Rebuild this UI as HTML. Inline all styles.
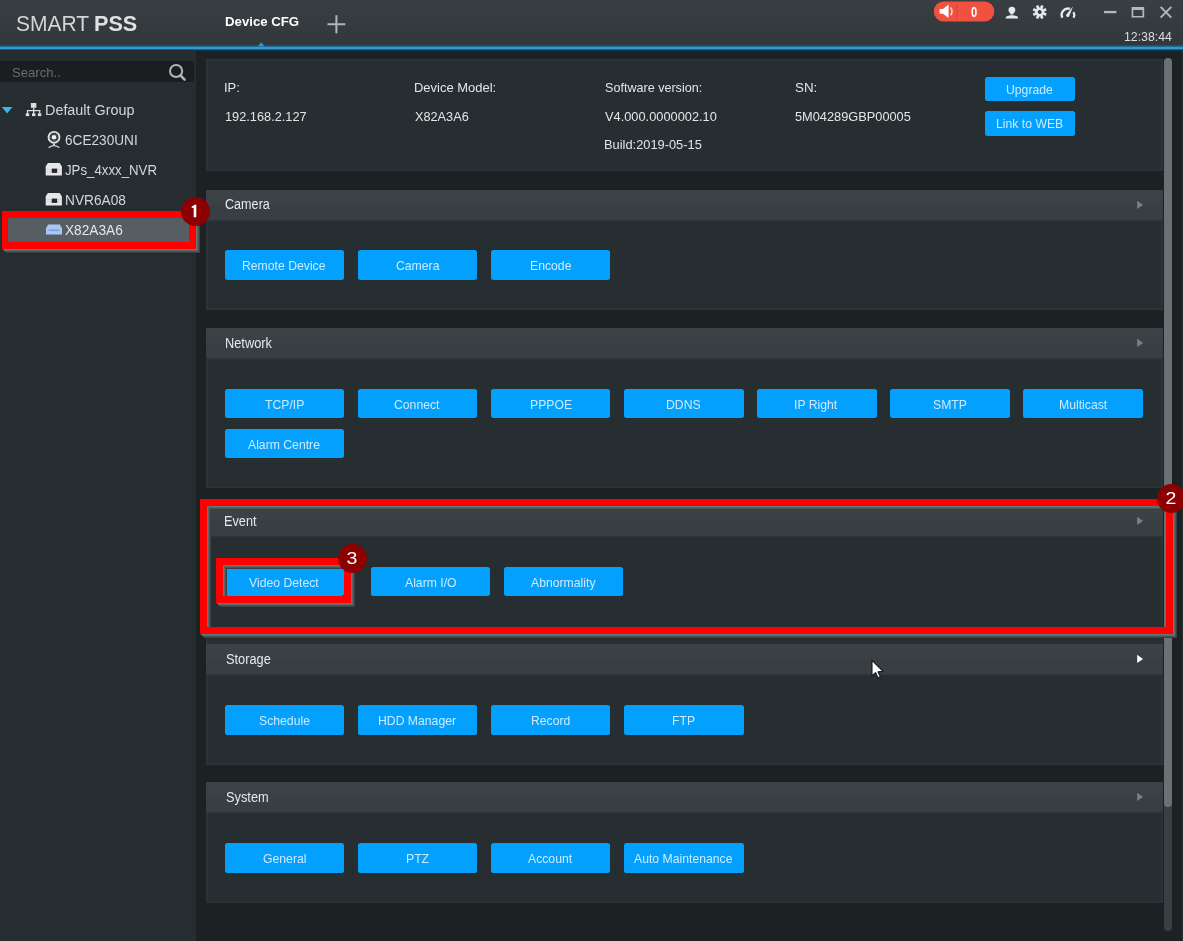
<!DOCTYPE html>
<html><head><meta charset="utf-8">
<style>
*{box-sizing:border-box;margin:0;padding:0}
html,body{width:1183px;height:941px;overflow:hidden;background:#1c2123;font-family:"Liberation Sans",sans-serif}
.abs{position:absolute}
#top{position:absolute;left:0;top:0;width:1183px;height:46px;background:linear-gradient(#393e42,#353a3e 60%,#32373b)}
#blue{position:absolute;left:0;top:45px;width:1183px;height:6px;background:linear-gradient(#2a4a5c 0%,#13608f 22%,#3796cf 40%,#3a9cd5 58%,#145c8a 74%,#0c3a58 88%,#17242c 100%)}
#side{position:absolute;left:0;top:50px;width:196.3px;height:891px;background:#262d30}
#search{position:absolute;left:0;top:61.4px;width:194.3px;height:21px;background:#1b1e21;border-radius:0 3px 3px 0}
.t{position:absolute;z-index:5;white-space:nowrap;line-height:20px;transform-origin:left center}
.panel{position:absolute;left:206.3px;width:956.5px;background:#272e31;box-shadow:inset 0 0 0 1.5px #2e3538}
.hdr{position:absolute;left:206.3px;width:956.5px;height:30px;background:linear-gradient(#3c4245,#3a4043 45%,#383e42 55%,#383e42)}
.btn{position:absolute;background:#03a1fd;border-radius:2.5px}
.red{position:absolute;z-index:3;border:7px solid #ff0000;filter:drop-shadow(1px 1px 0 #6d7273) drop-shadow(1px 1px 0 #5f6465) drop-shadow(1px 1px 0 #4e5355) drop-shadow(1px 1px 0.4px #3a3f42)}
.badge{position:absolute;z-index:6;width:29.6px;height:29.6px;border-radius:50%;background:#8b0000}
.bt{position:absolute;z-index:7;color:#fff;font-size:17px;line-height:20px;width:30px;text-align:center}
</style></head><body>
<div id="top"></div>
<div id="blue"></div>
<svg class="abs" style="left:256px;top:40px" width="12" height="8"><path d="M2,6.2 L5.2,2.2 L8.4,6.2 Z" fill="#2d97d4"/></svg>
<!-- plus -->
<svg class="abs" style="left:326px;top:14px" width="22" height="22"><path d="M1.5,10.2 H19.3 M10.4,1.2 V19.2" stroke="#b3b6b8" stroke-width="2" fill="none"/></svg>

<!-- top right icons -->
<svg class="abs" style="left:930px;top:0" width="253" height="24">
 <rect x="3.8" y="1.4" width="60.5" height="20.2" rx="10.1" fill="#f1513f"/>
 <rect x="26.4" y="4.5" width="1" height="14" fill="#d9432f"/>
 <path d="M9.6,9 H13 L18.6,4.6 V18 L13,13.8 H9.6 Z" fill="#fff"/>
 <path d="M20.5,7.5 Q23.6,11.3 20.5,15.2" stroke="#fbd0c8" stroke-width="1.6" fill="none"/>
 <!-- user -->
 <path d="M81.9,6.7 C84.2,6.7 85.4,8.3 85.3,10 C85.2,11.8 84.2,13 83.2,13.8 L83.2,14.6 L80.6,14.6 L80.6,13.8 C79.6,13 78.6,11.8 78.5,10 C78.4,8.3 79.6,6.7 81.9,6.7 Z" fill="#e6e8ea"/>
 <path d="M75.8,18.5 V17.6 C75.8,16.2 78.5,15.2 81.9,15.2 C85.3,15.2 88,16.2 88,17.6 V18.5 Z" fill="#e6e8ea"/>
 <!-- gear -->
 <g transform="translate(109.7,12) rotate(22.5)" fill="none" stroke="#e6e8ea">
  <circle r="3.35" stroke-width="2.7"/>
  <g stroke-width="2.7">
   <path d="M0,-4.2 V-7"/><path d="M0,4.2 V7"/><path d="M-4.2,0 H-7"/><path d="M4.2,0 H7"/>
   <path d="M3,-3 L4.9,-4.9"/><path d="M-3,-3 L-4.9,-4.9"/><path d="M3,3 L4.9,4.9"/><path d="M-3,3 L-4.9,4.9"/>
  </g>
 </g>
 <!-- gauge -->
 <path d="M132.39,17.76 A6.3,6.3 0 0 1 139.95,8.91" stroke="#e6e8ea" stroke-width="2.4" fill="none"/>
 <path d="M143.56,11.94 A6.3,6.3 0 0 1 143.61,17.76" stroke="#e6e8ea" stroke-width="2.3" fill="none"/>
 <path d="M136.3,14.4 L143.1,6.3 L139.2,16.2 A1.6,1.6 0 0 1 136.3,14.4 Z" fill="#e6e8ea"/>
 <!-- window controls -->
 <rect x="174" y="10.9" width="12.4" height="2.3" fill="#b6b9bc"/>
 <path d="M201.6,7 H214.2 V17.6 H201.6 Z M203.3,10 V15.9 H212.5 V10 Z" fill="#b6b9bc" fill-rule="evenodd"/>
 <path d="M230.6,6.9 L241.3,17.6 M241.3,6.9 L230.6,17.6" stroke="#b6b9bc" stroke-width="1.9" fill="none"/>
</svg>
<div class="t" style="left:970.8px;top:2.9px;font-size:13px;font-weight:bold;color:#fff;width:6px;transform:scale(.86,1.12)">0</div>

<div id="side"></div>
<div id="search"></div>
<svg class="abs" style="left:166px;top:61px" width="22" height="22"><circle cx="10.1" cy="10" r="6.1" stroke="#b2b5b8" stroke-width="2" fill="none"/><path d="M14.4,14.4 L18.6,18.6" stroke="#b2b5b8" stroke-width="2.6" stroke-linecap="round"/></svg>

<!-- tree icons -->
<svg class="abs" style="left:0;top:100px" width="70" height="140">
 <path d="M1.8,7 H12.4 L7.1,13.6 Z" fill="#36b5ef"/>
 <g fill="#dedede">
  <rect x="30.9" y="3" width="5.4" height="4.8"/>
  <rect x="33" y="7.8" width="1.3" height="5.6"/>
  <rect x="26.9" y="10" width="13.4" height="1.2"/>
  <rect x="26.9" y="10" width="1.2" height="3.6"/><rect x="39.1" y="10" width="1.2" height="3.6"/>
  <rect x="25.8" y="13.3" width="3.4" height="2.8"/><rect x="32" y="13.3" width="3.4" height="2.8"/><rect x="37.9" y="13.3" width="3.4" height="2.8"/>
 </g>
 <!-- camera -->
 <circle cx="54" cy="37.3" r="5.45" stroke="#e0e0e0" stroke-width="1.9" fill="none"/>
 <circle cx="54" cy="37.3" r="2.3" fill="#f2f2f2"/>
 <circle cx="54" cy="37.3" r="3.4" stroke="#6f7375" stroke-width="0.6" fill="none"/>
 <path d="M53,43.5 h2 v1.6 h-2 z" fill="#cfcfcf"/>
 <path d="M48.6,47.7 Q54,43.6 59.4,47.7" stroke="#cfcfcf" stroke-width="1.3" fill="none"/>
 <!-- nvr 1 -->
 <g id="nvr"><path d="M47.9,63 H59.7 L61.9,66.6 V75.5 H45.7 V66.6 Z" fill="#e7e7e7"/><rect x="51.7" y="68.6" width="5.5" height="4.3" fill="#23272a"/><path d="M46.5,69.5 H51 M46.5,71.8 H51 M57.8,69.5 H61 M57.8,71.8 H61" stroke="#c8c8c8" stroke-width="0.7"/></g>
 <use href="#nvr" y="30"/>
 <path d="M48.2,124.4 H59.8 L62,128.2 V134.5 H46 V128.2 Z" fill="#a9c8f1"/>
 <rect x="48.5" y="129.6" width="11" height="1.3" fill="#6c9de0"/>
</svg>
<!-- selected row -->
<div class="abs" style="left:8.4px;top:217.8px;width:180.8px;height:23.9px;background:#575e63;z-index:4"></div>
<svg class="abs" style="left:40px;top:220px;z-index:5" width="30" height="20"><path d="M8.2,4.4 H19.8 L22,8.2 V14.5 H6 V8.2 Z" fill="#a9c8f1"/><rect x="8.5" y="9.6" width="11" height="1.3" fill="#6c9de0"/></svg>

<!-- info panel -->
<div class="panel" style="top:59.3px;height:112px"></div>
<div class="hdr" style="top:189.5px"></div><div class="panel" style="top:219.5px;height:90.5px"></div>
<svg class="abs" style="left:1136px;top:199.5px" width="8" height="10"><path d="M1.2,0.8 L7,4.9 L1.2,9 Z" fill="#7b8085"/></svg>
<div class="hdr" style="top:327.5px"></div><div class="panel" style="top:357.5px;height:130.3px"></div>
<svg class="abs" style="left:1136px;top:337.5px" width="8" height="10"><path d="M1.2,0.8 L7,4.9 L1.2,9 Z" fill="#7b8085"/></svg>
<div class="hdr" style="top:506px"></div><div class="panel" style="top:536px;height:121px"></div>
<svg class="abs" style="left:1136px;top:516px" width="8" height="10"><path d="M1.2,0.8 L7,4.9 L1.2,9 Z" fill="#7b8085"/></svg>
<div class="hdr" style="top:644.4px"></div><div class="panel" style="top:674.4px;height:90.2px"></div>
<svg class="abs" style="left:1136px;top:654.4px" width="8" height="10"><path d="M1.2,0.8 L7,4.9 L1.2,9 Z" fill="#ffffff"/></svg>
<div class="hdr" style="top:782.2px"></div><div class="panel" style="top:812.2px;height:90.5px"></div>
<svg class="abs" style="left:1136px;top:792.2px" width="8" height="10"><path d="M1.2,0.8 L7,4.9 L1.2,9 Z" fill="#7b8085"/></svg>
<div class="btn" style="left:985px;top:77px;width:90px;height:24.4px"></div>
<div class="btn" style="left:985px;top:111.2px;width:90px;height:24.6px"></div>
<div class="btn" style="left:224.5px;top:250.2px;width:119.7px;height:29.7px"></div>
<div class="btn" style="left:357.6px;top:250.2px;width:119.7px;height:29.7px"></div>
<div class="btn" style="left:490.7px;top:250.2px;width:119.7px;height:29.7px"></div>
<div class="btn" style="left:224.5px;top:388.6px;width:119.7px;height:29.7px"></div>
<div class="btn" style="left:357.6px;top:388.6px;width:119.7px;height:29.7px"></div>
<div class="btn" style="left:490.7px;top:388.6px;width:119.7px;height:29.7px"></div>
<div class="btn" style="left:623.9px;top:388.6px;width:119.7px;height:29.7px"></div>
<div class="btn" style="left:757px;top:388.6px;width:119.7px;height:29.7px"></div>
<div class="btn" style="left:890.1px;top:388.6px;width:119.7px;height:29.7px"></div>
<div class="btn" style="left:1023.2px;top:388.6px;width:119.7px;height:29.7px"></div>
<div class="btn" style="left:224.5px;top:428.6px;width:119.7px;height:29.7px"></div>
<div class="btn" style="left:224.5px;top:566.8px;width:119.7px;height:29.7px"></div>
<div class="btn" style="left:370.6px;top:566.8px;width:119.7px;height:29.7px"></div>
<div class="btn" style="left:503.8px;top:566.8px;width:119.7px;height:29.7px"></div>
<div class="btn" style="left:224.5px;top:705px;width:119.7px;height:29.7px"></div>
<div class="btn" style="left:357.6px;top:705px;width:119.7px;height:29.7px"></div>
<div class="btn" style="left:490.7px;top:705px;width:119.7px;height:29.7px"></div>
<div class="btn" style="left:623.9px;top:705px;width:119.7px;height:29.7px"></div>
<div class="btn" style="left:224.5px;top:843.2px;width:119.7px;height:29.7px"></div>
<div class="btn" style="left:357.6px;top:843.2px;width:119.7px;height:29.7px"></div>
<div class="btn" style="left:490.7px;top:843.2px;width:119.7px;height:29.7px"></div>
<div class="btn" style="left:623.9px;top:843.2px;width:119.7px;height:29.7px"></div>
<div class="t" style="left:15.70px;top:13.90px;font-size:21.5px;color:#d3d5d7;font-weight:normal;transform:scale(0.9755,1.0)">SMART</div>
<div class="t" style="left:94.09px;top:13.90px;font-size:21.5px;color:#dfe1e3;font-weight:bold;transform:scale(1.0053,1.0)">PSS</div>
<div class="t" style="left:224.60px;top:12.00px;font-size:13px;color:#ffffff;font-weight:bold;transform:scale(1.0156,1.0)">Device CFG</div>
<div class="t" style="left:1124.00px;top:26.80px;font-size:12.5px;color:#dcdee0;font-weight:normal;transform:scale(0.9855,1.08)">12:38:44</div>
<div class="t" style="left:12.00px;top:62.80px;font-size:13px;color:#676c70;font-weight:normal;transform:scale(1.0104,1.0)">Search..</div>
<div class="t" style="left:44.57px;top:99.80px;font-size:14px;color:#d4d6d8;font-weight:normal;transform:scale(1.0270,1.04)">Default Group</div>
<div class="t" style="left:64.90px;top:129.60px;font-size:14px;color:#d4d6d8;font-weight:normal;transform:scale(0.9727,1.04)">6CE230UNI</div>
<div class="t" style="left:65.20px;top:159.90px;font-size:14px;color:#d4d6d8;font-weight:normal;transform:scale(0.9460,1.04)">JPs_4xxx_NVR</div>
<div class="t" style="left:64.52px;top:189.90px;font-size:14px;color:#d4d6d8;font-weight:normal;transform:scale(0.9794,1.04)">NVR6A08</div>
<div class="t" style="left:65.20px;top:219.70px;font-size:14px;color:#e3e5e8;font-weight:normal;transform:scale(0.9769,1.04)">X82A3A6</div>
<div class="t" style="left:223.81px;top:77.80px;font-size:13px;color:#e3e5e7;font-weight:normal;transform:scale(0.9942,1.05)">IP:</div>
<div class="t" style="left:224.80px;top:106.50px;font-size:13px;color:#e3e5e7;font-weight:normal;transform:scale(0.9818,1.05)">192.168.2.127</div>
<div class="t" style="left:413.50px;top:77.80px;font-size:13px;color:#e3e5e7;font-weight:normal;transform:scale(0.9981,1.05)">Device Model:</div>
<div class="t" style="left:414.50px;top:106.50px;font-size:13px;color:#e3e5e7;font-weight:normal;transform:scale(0.9780,1.05)">X82A3A6</div>
<div class="t" style="left:604.90px;top:77.80px;font-size:13px;color:#e3e5e7;font-weight:normal;transform:scale(0.9677,1.05)">Software version:</div>
<div class="t" style="left:604.90px;top:106.50px;font-size:13px;color:#e3e5e7;font-weight:normal;transform:scale(0.9853,1.05)">V4.000.0000002.10</div>
<div class="t" style="left:603.91px;top:134.80px;font-size:13px;color:#e3e5e7;font-weight:normal;transform:scale(0.9879,1.05)">Build:2019-05-15</div>
<div class="t" style="left:794.90px;top:77.80px;font-size:13px;color:#e3e5e7;font-weight:normal;transform:scale(1.0257,1.05)">SN:</div>
<div class="t" style="left:794.90px;top:106.50px;font-size:13px;color:#e3e5e7;font-weight:normal;transform:scale(0.9831,1.05)">5M04289GBP00005</div>
<div class="t" style="left:224.80px;top:194.90px;font-size:13px;color:#e6e8ea;font-weight:normal;transform:scale(0.9700,1.08)">Camera</div>
<div class="t" style="left:224.51px;top:333.60px;font-size:13px;color:#e6e8ea;font-weight:normal;transform:scale(0.9850,1.08)">Network</div>
<div class="t" style="left:224.32px;top:512.10px;font-size:13px;color:#e6e8ea;font-weight:normal;transform:scale(0.9800,1.08)">Event</div>
<div class="t" style="left:225.50px;top:650.40px;font-size:13px;color:#e6e8ea;font-weight:normal;transform:scale(0.9850,1.08)">Storage</div>
<div class="t" style="left:225.50px;top:788.30px;font-size:13px;color:#e6e8ea;font-weight:normal;transform:scale(0.9850,1.08)">System</div>
<div class="t" style="left:1006.43px;top:79.70px;font-size:12.1px;color:#cdebff;font-weight:normal;transform:scale(1.0100,1.05)">Upgrade</div>
<div class="t" style="left:996.43px;top:113.90px;font-size:12.1px;color:#cdebff;font-weight:normal;transform:scale(1.0100,1.05)">Link to WEB</div>
<div class="t" style="left:242.46px;top:256.25px;font-size:12.1px;color:#cdebff;font-weight:normal;transform:scale(1.0100,1.05)">Remote Device</div>
<div class="t" style="left:395.59px;top:256.25px;font-size:12.1px;color:#cdebff;font-weight:normal;transform:scale(1.0100,1.05)">Camera</div>
<div class="t" style="left:529.70px;top:256.25px;font-size:12.1px;color:#cdebff;font-weight:normal;transform:scale(1.0100,1.05)">Encode</div>
<div class="t" style="left:264.70px;top:394.65px;font-size:12.1px;color:#cdebff;font-weight:normal;transform:scale(1.0100,1.05)">TCP/IP</div>
<div class="t" style="left:394.38px;top:394.65px;font-size:12.1px;color:#cdebff;font-weight:normal;transform:scale(1.0100,1.05)">Connect</div>
<div class="t" style="left:529.54px;top:394.65px;font-size:12.1px;color:#cdebff;font-weight:normal;transform:scale(1.0100,1.05)">PPPOE</div>
<div class="t" style="left:666.48px;top:394.65px;font-size:12.1px;color:#cdebff;font-weight:normal;transform:scale(1.0100,1.05)">DDNS</div>
<div class="t" style="left:794.30px;top:394.65px;font-size:12.1px;color:#cdebff;font-weight:normal;transform:scale(1.0100,1.05)">IP Right</div>
<div class="t" style="left:933.02px;top:394.65px;font-size:12.1px;color:#cdebff;font-weight:normal;transform:scale(1.0100,1.05)">SMTP</div>
<div class="t" style="left:1058.63px;top:394.65px;font-size:12.1px;color:#cdebff;font-weight:normal;transform:scale(1.0100,1.05)">Multicast</div>
<div class="t" style="left:248.24px;top:434.65px;font-size:12.1px;color:#cdebff;font-weight:normal;transform:scale(1.0100,1.05)">Alarm Centre</div>
<div class="t" style="left:249.17px;top:572.85px;font-size:12.1px;color:#cdebff;font-weight:normal;transform:scale(1.0100,1.05)">Video Detect</div>
<div class="t" style="left:404.87px;top:572.85px;font-size:12.1px;color:#cdebff;font-weight:normal;transform:scale(1.0100,1.05)">Alarm I/O</div>
<div class="t" style="left:530.92px;top:572.85px;font-size:12.1px;color:#cdebff;font-weight:normal;transform:scale(1.0100,1.05)">Abnormality</div>
<div class="t" style="left:258.74px;top:711.05px;font-size:12.1px;color:#cdebff;font-weight:normal;transform:scale(1.0100,1.05)">Schedule</div>
<div class="t" style="left:378.43px;top:711.05px;font-size:12.1px;color:#cdebff;font-weight:normal;transform:scale(1.0100,1.05)">HDD Manager</div>
<div class="t" style="left:531.23px;top:711.05px;font-size:12.1px;color:#cdebff;font-weight:normal;transform:scale(1.0100,1.05)">Record</div>
<div class="t" style="left:672.25px;top:711.05px;font-size:12.1px;color:#cdebff;font-weight:normal;transform:scale(1.0100,1.05)">FTP</div>
<div class="t" style="left:262.97px;top:849.25px;font-size:12.1px;color:#cdebff;font-weight:normal;transform:scale(1.0100,1.05)">General</div>
<div class="t" style="left:405.61px;top:849.25px;font-size:12.1px;color:#cdebff;font-weight:normal;transform:scale(1.0100,1.05)">PTZ</div>
<div class="t" style="left:528.16px;top:849.25px;font-size:12.1px;color:#cdebff;font-weight:normal;transform:scale(1.0100,1.05)">Account</div>
<div class="t" style="left:634.38px;top:849.25px;font-size:12.1px;color:#cdebff;font-weight:normal;transform:scale(1.0100,1.05)">Auto Maintenance</div>

<!-- scrollbar -->
<div class="abs" style="left:1163.8px;top:58px;width:8.4px;height:872.5px;background:#3a3f43;border-radius:4px"></div>
<div class="abs" style="left:1163.8px;top:58.3px;width:8.6px;height:749px;background:#6a7174;border-radius:4px"></div>
<div class="abs" style="left:1182px;top:51px;width:1px;height:890px;background:#262c2f"></div>

<svg class="abs" style="left:866px;top:655px" width="24" height="28"><path d="M6,5.3 V20.9 L9.6,17.7 L12,22.7 L14.4,21.7 L12,16.9 L17.1,16.4 Z" fill="#fdfdfd" stroke="#15181a" stroke-width="1.1" stroke-linejoin="round"/></svg>
<!-- red annotations -->
<div class="red" style="left:1.6px;top:211px;width:194.3px;height:38px"></div>
<div class="badge" style="left:180.8px;top:196.6px"></div><svg class="abs" style="left:185px;top:200px;z-index:7" width="20" height="22"><path d="M11.3,4.8 V17.2 H8.7 V7.7 L6.7,8 V6.4 Q8.5,6 9.4,4.8 Z" fill="#fff"/></svg>
<div class="red" style="left:200.2px;top:498.9px;width:973px;height:135.1px"></div>
<div class="badge" style="left:1156.8px;top:483.6px"></div><div class="bt" style="left:1156.2px;top:489.3px;transform:scale(1.15,1.02)">2</div>
<div class="red" style="left:216px;top:558px;width:135.1px;height:44.9px"></div>
<div class="badge" style="left:337.9px;top:543.7px"></div><div class="bt" style="left:337.1px;top:549.4px;transform:scale(1.15,1.02)">3</div>
</body></html>
